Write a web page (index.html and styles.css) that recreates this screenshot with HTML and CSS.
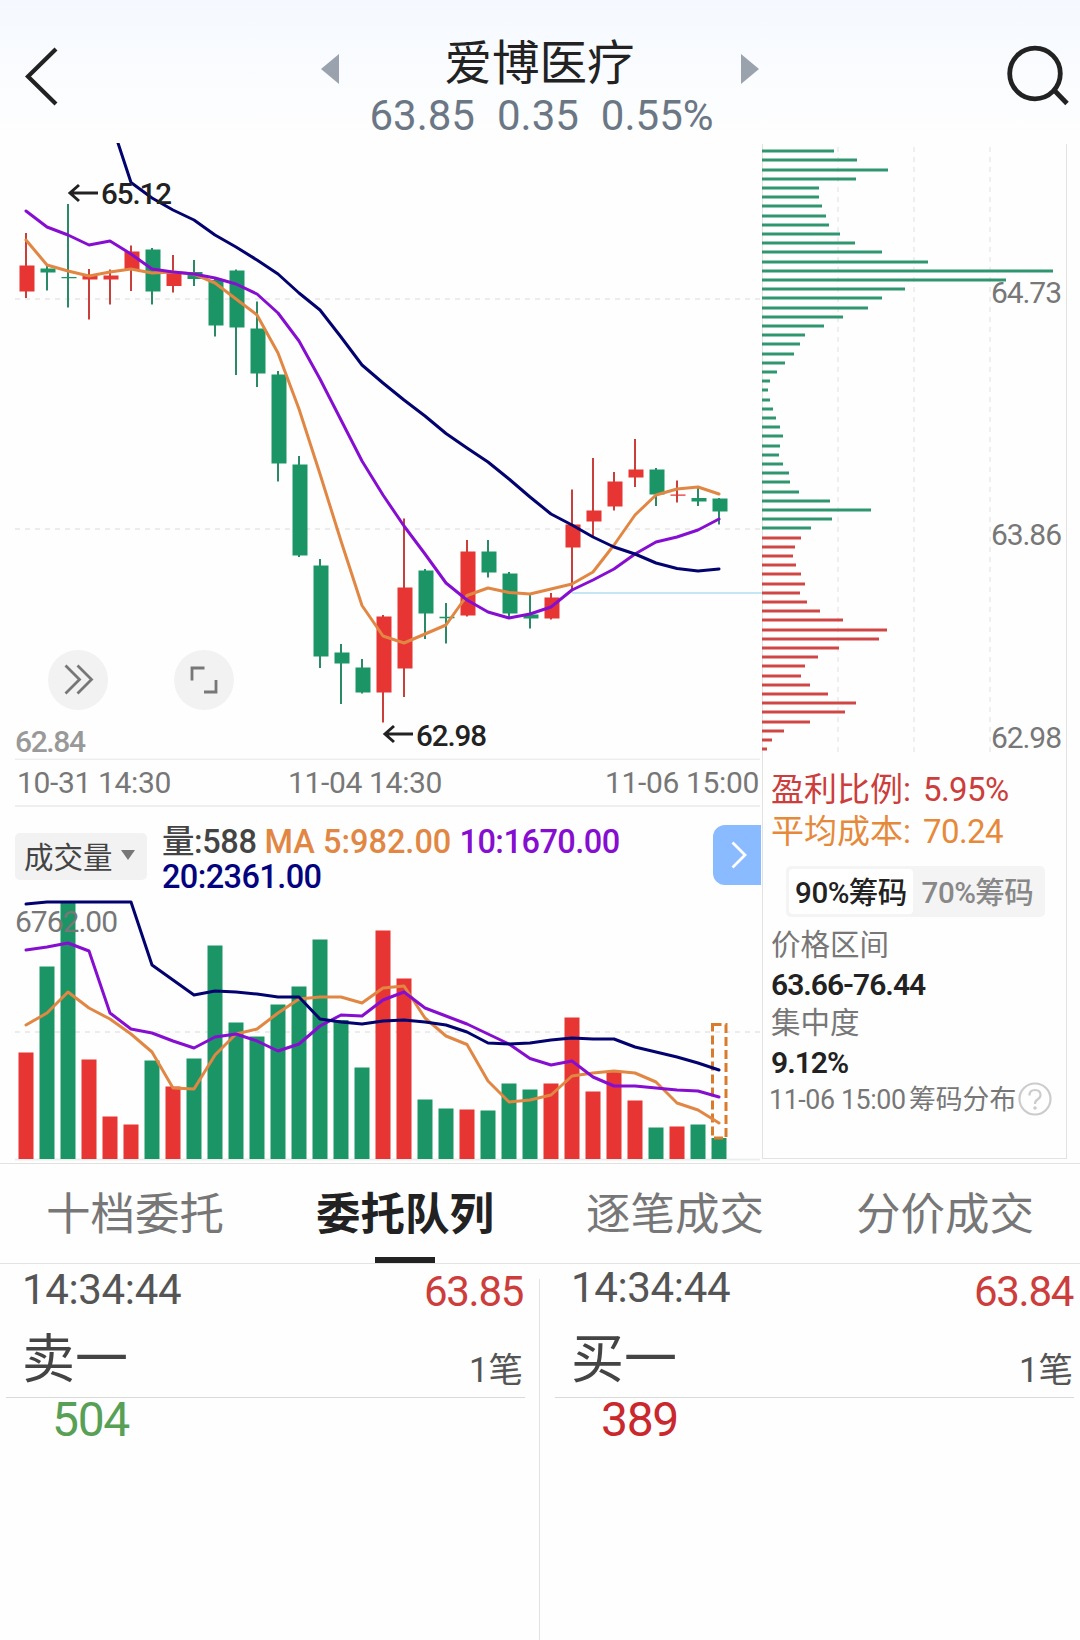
FILE: index.html
```html
<!DOCTYPE html>
<html lang="zh-CN">
<head>
<meta charset="utf-8">
<title>爱博医疗</title>
<link rel="stylesheet" href="styles.css">
</head>
<body>
<header class="topbar">
  <svg class="back" width="34" height="60" viewBox="24 46 34 60"><path d="M56 49 28 76.500 56 104" fill="none" stroke="#222" stroke-width="4.200"/></svg>
  <div class="stock">
    <svg width="18" height="30" viewBox="0 0 18 30"><path d="M18 0V30L0 15Z" fill="#9aa3ad"/></svg>
    <div class="stock-info">
      <h1>爱博医疗</h1>
      <div class="quote"><span>63.85</span><span>0.35</span><span>0.55%</span></div>
    </div>
    <svg width="18" height="30" viewBox="0 0 18 30"><path d="M0 0V30L18 15Z" fill="#9aa3ad"/></svg>
  </div>
  <svg class="search" width="64" height="62" viewBox="1006 44 64 62"><g fill="none" stroke="#222" stroke-width="4.800"><circle cx="1035" cy="73.500" r="25.300"/><path d="M1053 89 1067 103.500"/></g></svg>
</header>

<main class="charts">
  <section class="left">
    <svg class="kline" width="762" height="617" viewBox="0 143 762 617">
      <path class="grid" d="M15 299H760M15 529H760"/>
      <path class="rule" d="M15 759.500H760"/>
      <path d="M572 593H762" stroke="#c5e6f3" stroke-width="2"/>
      <path class="wick up" d="M26 233V298M89 269V319.500M110 269.500V304.500M131 245.500V291M173 255V292.500M383 615V722.500M404 518.500V697M467 540V616.500M551 593V619.500M572 489.500V590M593 458V537M614 472V510.500M635 439V487M677 480.500V502.500"/>
      <path class="wick down" d="M47 266V290.500M68 204V307.500M152 248V304.500M194 260V286M215 277V336.500M236 269.500V375M257 301.500V387M278 371V481.500M299 456V557M320 559V668M341 644V704M362 659V693.500M425 569V639M446 603V643.500M488 540V577.500M509 572V619M530 595V628.500M656 468V506M698 487V506M719 498V524.500"/>
      <path class="body up" d="M27 265.500V291.500M90 275.500V279.500M111 275.500V279.500M132 251.500V270M174 272V286M384 616.500V692.500M405 587.500V668.500M468 551.500V615.500M552 597.500V618.500M573 524.500V547.500M594 510.500V521.500M615 481.500V506.500M636 469.500V477.500M678 494.500V495.800"/>
      <path class="body down" d="M48 268.500V272.500M69 277V278.300M153 249.500V291.500M195 272V279M216 280V325.500M237 270.500V327.500M258 328.500V373.500M279 374.500V463.500M300 464.500V555.500M321 565.500V656.500M342 652.500V663.500M363 667.500V692.500M426 570.500V613.500M447 616.800V618.300M489 551.500V572.500M510 573.500V613.500M531 614.500V618.500M657 469.500V494.500M699 498V501.500M720 498.500V511.500"/>
      <polyline class="ma ma5" points="26,240 47,265 68,271 89,276 110,272 131,269 152,273 173,272 194,274 215,283 236,299 257,315 278,353 299,409 320,474 341,541 362,605.500 383,636 404,643 425,634 446,625 467,595.500 488,588 509,592.500 530,594 551,589 572,584 593,572 614,545 635,515 656,495 677,489 698,487 719,494"/>
      <polyline class="ma ma10" points="26,211 47,227 68,235 89,245 110,241 131,254 152,269 173,272 194,274 215,278 236,284 257,294 278,313 299,341 320,379 341,420 362,461 383,495 404,526 425,554 446,583 467,600 488,612 509,618 530,614 551,607 572,590 593,580 614,569 635,554 656,542 677,537 698,530 719,519"/>
      <polyline class="ma ma20" points="118,143 131,182.500 152,198 173,210 194,220 215,235 236,247 257,260 278,274 299,293 320,310 341,337 362,365 383,383 404,400 425,416 446,433.500 467,448 488,462 509,479 530,497 551,514 572,525 593,537 614,547 635,554 656,563 677,568.500 698,571 719,569"/>
      <g fill="none" stroke="#222" stroke-width="3"><path d="M98 193H70M79 185 70 193 79 201"/><path d="M413 734H385M394 726 385 734 394 742"/></g>
      <text class="mark" x="101" y="204" textLength="71">65.12</text>
      <text class="mark" x="416" y="746" textLength="71">62.98</text>
      <text class="low" x="15" y="752" textLength="71">62.84</text>
      <g fill="#f2f2f2"><circle cx="78" cy="680" r="30"/><circle cx="204" cy="680" r="30"/></g>
      <g fill="none" stroke="#777" stroke-width="2.800"><path d="M65.500 665.500 79.500 679.500 65.500 693.500M77.500 665.500 91.500 679.500 77.500 693.500"/><path d="M192 680.500V668H204.500M204 692H216V680"/></g>
    </svg>
    <div class="dates"><span>10-31 14:30</span><span class="mid">11-04 14:30</span><span>11-06 15:00</span></div>
    <div class="vol-head">
      <div class="picker">成交量<svg width="14" height="10" viewBox="0 0 14 10"><path d="M0 0H14L7 10Z" fill="#777"/></svg></div>
      <div class="legend"><span class="c-now">量:588</span> <span class="c5">MA 5:982.00</span> <span class="c10">10:1670.00</span><br><span class="c20">20:2361.00</span></div>
      <div class="next"><svg width="16" height="28" viewBox="0 0 16 28"><path d="M1.500 1.500 14 14 1.500 26.500" fill="none" stroke="#fff" stroke-width="2.800"/></svg></div>
    </div>
    <svg class="volume" width="762" height="268" viewBox="0 895 762 268">
      <path class="grid" d="M15 1032H760"/>
      <path class="rule" d="M15 1159.500H760"/>
      <path class="vol up" d="M26 1159V1052.500M89 1159V1059.500M110 1159V1116.500M131 1159V1124.500M173 1159V1086.500M383 1159V930.500M404 1159V978.500M467 1159V1109.500M551 1159V1083.500M572 1159V1017.500M593 1159V1091.500M614 1159V1072M635 1159V1100.500M677 1159V1126.500"/>
      <path class="vol down" d="M47 1159V966.500M68 1159V903M152 1159V1060.500M194 1159V1058.500M215 1159V945.500M236 1159V1022.500M257 1159V1036.500M278 1159V1004.500M299 1159V986.500M320 1159V939.500M341 1159V1020M362 1159V1067.500M425 1159V1099.500M446 1159V1108.500M488 1159V1110.500M509 1159V1083.500M530 1159V1089.500M656 1159V1127.500M698 1159V1124.500M719 1159V1138"/>
      <text class="vmax" x="15" y="932" textLength="103">6762.00</text>
      <rect x="712.500" y="1024.500" width="13.500" height="113.500" fill="none" stroke="#d97b2c" stroke-width="3" stroke-dasharray="9 4"/>
      <polyline class="ma ma5" points="26,1025 47,1013 68,992 89,1008 110,1019 131,1034 152,1052 173,1088 194,1089 215,1055 236,1034 257,1029 278,1013 299,999 320,997 341,997 362,1003 383,988 404,986 425,1018 446,1036 467,1044.500 488,1081 509,1102 530,1100 551,1095 572,1076 593,1073 614,1071 635,1073 656,1082 677,1103 698,1110 719,1123"/>
      <polyline class="ma ma10" points="26,950 47,947 68,943 89,951 110,1013 131,1029 152,1033 173,1041 194,1048 215,1037 236,1034 257,1041 278,1051 299,1044 320,1026 341,1015 362,1016 383,1000 404,992 425,1008 446,1016 467,1024 488,1034 509,1044 530,1058.500 551,1065 572,1061 593,1077 614,1086 635,1086 656,1088 677,1090 698,1091 719,1097"/>
      <polyline class="ma ma20" points="26,904 47,902 68,902 89,902 110,902 131,902 152,965 173,980 194,995 215,991 236,992 257,994 278,997 299,997 320,1019 341,1022 362,1024 383,1021 404,1020 425,1022 446,1025 467,1032 488,1043 509,1044 530,1043 551,1040 572,1038 593,1039 614,1039 635,1047 656,1052 677,1057 698,1063 719,1070"/>
    </svg>
  </section>

  <section class="chips">
    <svg class="chip-chart" width="305" height="614" viewBox="762 144 305 614">
      <path d="M838 147V757M914 147V757M990 147V757" fill="none" stroke="#efefef" stroke-width="2" stroke-dasharray="5 5"/>
      <path class="chip down" d="M762 151H834M762 160H857M762 170H888M762 179H856M762 188H819M762 197H819M762 206H822M762 216H826M762 225H829M762 234H840M762 243H855M762 252H882M762 262H928M762 271H1053M762 280H1006M762 289H905M762 298H882M762 308H868M762 317H843M762 326H824M762 335H805M762 344H800M762 354H794M762 363H785M762 372H777M762 381H770M762 390H768M762 400H770M762 409H773M762 418H776M762 427H780M762 436H783M762 446H780M762 455H779M762 464H783M762 473H789M762 482H790M762 492H799M762 501H830M762 510H871M762 519H832M762 528H811"/>
      <path class="chip up" d="M762 538H801M762 547H795M762 556H793M762 565H796M762 574H801M762 584H805M762 593H800M762 602H807M762 611H820M762 620H843M762 630H887M762 639H879M762 648H839M762 657H818M762 666H805M762 676H801M762 685H810M762 694H828M762 703H856M762 712H845M762 722H810M762 731H784M762 740H772M762 749H767"/>
      <text class="price" x="991" y="303" textLength="71">64.73</text>
      <text class="price" x="991" y="545" textLength="71">63.86</text>
      <text class="price" x="991" y="748" textLength="71">62.98</text>
    </svg>
    <div class="stats">
      <p class="big profit"><span>盈利比例:</span><span>5.95%</span></p>
      <p class="big cost"><span>平均成本:</span><span>70.24</span></p>
      <div class="seg"><span class="on">90%筹码</span><span>70%筹码</span></div>
      <p class="label">价格区间</p>
      <p class="value">63.66-76.44</p>
      <p class="label">集中度</p>
      <p class="value">9.12%</p>
      <p class="foot"><span class="foot-time">11-06 15:00</span><span>筹码分布</span><svg width="34" height="34" viewBox="0 0 34 34"><g fill="none" stroke="#ccc" stroke-width="2.200"><circle cx="17" cy="17" r="15.500"/><path d="M11.500 13.500Q11.500 8 17 8T22.500 13Q22.500 15.500 19.500 17.500Q17 19 17 22"/></g><circle cx="17" cy="26" r="1.800" fill="#ccc"/></svg></p>
    </div>
  </section>
</main>

<nav class="tabs"><a>十档委托</a><a class="active">委托队列</a><a>逐笔成交</a><a>分价成交</a></nav>

<section class="queue">
  <div class="side sell">
    <div class="line1"><span class="time">14:34:44</span><span class="px">63.85</span></div>
    <div class="line2"><span class="name">卖一</span><span class="count">1笔</span></div>
    <div class="qty">504</div>
  </div>
  <div class="side buy">
    <div class="line1"><span class="time">14:34:44</span><span class="px">63.84</span></div>
    <div class="line2"><span class="name">买一</span><span class="count">1笔</span></div>
    <div class="qty">389</div>
  </div>
</section>
</body>
</html>
```
FILE: styles.css
```css
* { box-sizing: border-box; margin: 0; padding: 0; }
body {
  width: 1080px; height: 1640px; overflow: hidden; background: #fefefe; color: #222;
  font-family: Roboto, "Noto Sans CJK SC", sans-serif;
  display: flex; flex-direction: column;
}
svg { display: block; flex: none; }
.topbar { height: 143px; flex: none; display: flex; padding: 0 10px 0 24px; background: linear-gradient(#f5f9ff, #fefefe 95%); }
.back { margin-top: 46px; }
.search { margin: 44px 0 0 auto; }
.stock { display: flex; width: 438px; margin-left: 263px; justify-content: space-between; }
.stock > svg { margin-top: 54px; }
.stock-info { padding-top: 34px; text-align: center; }
h1 { font-size: 47.500px; font-weight: 400; line-height: 61px; }
.quote { display: flex; gap: 22px; font-size: 42px; line-height: 41px; color: #6b7785; justify-content: center; padding-left: 3px; }
h1 { padding-right: 1px; }

.charts { display: flex; height: 1020px; flex: none; }
.left { width: 762px; display: flex; flex-direction: column; }
.grid { fill: none; stroke: #ececec; stroke-width: 2; stroke-dasharray: 5 5; }
.rule { stroke: #eceeee; stroke-width: 2; }
.wick { fill: none; stroke-width: 2; }
.body, .vol { fill: none; stroke-width: 15; }
.up { stroke: #e63532; }
.down { stroke: #1b9566; }
.wick.up { stroke: #c93f3b; }
.wick.down { stroke: #2b8a66; }
.ma { fill: none; stroke-width: 3; stroke-linejoin: round; stroke-linecap: round; }
.ma5 { stroke: #e18743; }
.ma10 { stroke: #860ed0; }
.ma20 { stroke: #03036f; }
.mark { font-size: 29.500px; font-weight: 500; fill: #222; }
.low { font-size: 30px; font-weight: 500; fill: #999; }
.vmax { font-size: 30px; fill: #777; }
.price { font-size: 30px; fill: #777; }
.dates { height: 47px; border-bottom: 2px solid #efefef; margin: 0 2px 0 15px; padding: 0 1px 0 2px; display: flex; font-size: 30px; line-height: 46px; letter-spacing: -.35px; color: #777; }
.dates span { flex: none; }
.dates .mid { margin: 0 auto 0 117px; }
.vol-head { height: 88px; display: flex; padding-left: 15px; }
.picker { width: 132px; height: 47px; margin-top: 26px; padding: 0 12px 3px 9px; background: #f2f2f2; border-radius: 5px; display: flex; align-items: center; justify-content: space-between; font-size: 29.500px; color: #444; }
.legend { margin: 18px 0 0 15px; font-size: 32.500px; font-weight: 500; line-height: 35px; white-space: nowrap; }
.c-now { color: #444; letter-spacing: -.4px; }
.c5 { color: #e18743; }
.c10 { color: #860ed0; letter-spacing: -.5px; }
.c20 { color: #03037f; letter-spacing: -.6px; }
.next { width: 48px; height: 60px; margin: 18px 1px 0 auto; border-radius: 12px 0 0 12px; background: #8abaff; display: flex; align-items: center; justify-content: center; padding-left: 4px; }

.chips { width: 305px; height: 1015px; margin-top: 1px; border: solid #e2e2e2; border-width: 0 1px 1px 1px; }
.chip-chart { margin-left: -1px; }
.chip { fill: none; stroke-width: 3; }
.chip.down { stroke: #2f9670; }
.chip.up { stroke: #cf4744; }
.stats { padding: 11px 0 0 8px; }
.big { display: flex; gap: 12px; font-size: 33px; line-height: 41.500px; letter-spacing: -.6px; }
.big span:first-child { width: 140px; white-space: nowrap; letter-spacing: 0; }
.profit { color: #cc3d3c; }
.cost { color: #e6893a; }
.seg { display: flex; width: 259px; height: 51px; margin: 14px 0 9px 15px; padding: 3px; background: #f4f4f4; border-radius: 5px; font-size: 29.500px; font-weight: 500; line-height: 48px; letter-spacing: -.5px; color: #888; }
.seg span { width: 129px; text-align: center; white-space: nowrap; }
.seg .on { width: 124px; color: #222; background: #fff; border-radius: 4px; line-height: 48px; height: 45px; }
.label { font-size: 29.500px; line-height: 39px; color: #777; }
.value { font-size: 30px; line-height: 39px; font-weight: 600; letter-spacing: -1px; color: #222; }
.foot { display: flex; font-size: 26.800px; line-height: 36px; color: #777; white-space: nowrap; }
.foot-time { width: 140px; letter-spacing: -.4px; margin-left: -2px; }
.foot svg { margin-left: 2px; }

.tabs { height: 101px; flex: none; display: flex; border: solid #e2e2e2; border-width: 1px 0; }
.tabs a { flex: 1; text-align: center; font-size: 44.500px; line-height: 102px; color: #777; position: relative; }
.tabs .active { color: #222; font-weight: 700; }
.tabs .active::after { content: ""; position: absolute; left: 105px; bottom: 0; width: 60px; height: 6px; background: #222; }

.queue { display: flex; flex: 1; }
.side { width: 550px; flex: none; padding: 0 0 0 6px; position: relative; }
.buy { width: 530px; padding: 0 6px 0 5px; }
.sell::after { content: ""; position: absolute; left: 539px; top: 15px; bottom: 0; width: 1px; background: #e2e2e2; }
.line1, .line2 { display: flex; justify-content: space-between; width: 519px; padding: 0 2px 0 16px; }
.line1 { height: 51px; font-size: 42px; line-height: 50px; }
.time { color: #555; letter-spacing: -.35px; }
.sell .time { padding-top: 1px; }
.buy .time { margin-top: -1px; }
.px { color: #cc3d3c; padding-top: 3px; letter-spacing: -1.300px; }
.line2 { height: 83px; border-bottom: 1px solid #dadada; color: #444; }
.name { font-size: 53px; line-height: 62px; padding-top: 14px; }
.count { font-size: 34.500px; line-height: 70px; padding-top: 20px; color: #555; height: 70px; }
.buy .line1, .buy .line2 { padding-right: 1px; }
.qty { padding-left: 46px; font-size: 48px; line-height: 43px; letter-spacing: -1.300px; color: #57a055; }
.buy .qty { color: #c9282d; }
```
